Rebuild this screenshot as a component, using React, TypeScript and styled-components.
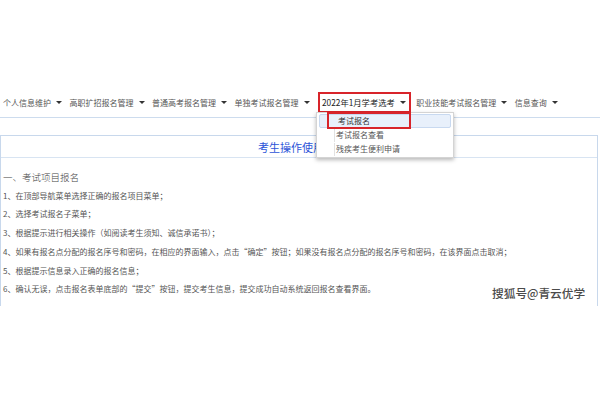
import React from "react";
import styled, { createGlobalStyle } from "styled-components";

const Global = createGlobalStyle`
  html, body { margin: 0; padding: 0; background: #fff; }
  body { font-family: "Noto Sans CJK SC", "Noto Sans", sans-serif; width: 600px; height: 400px; overflow: hidden; }
`;

const Page = styled.div`
  position: relative;
  width: 600px;
  height: 400px;
  padding-top: 88px;
  box-sizing: border-box;
`;

const Nav = styled.div`
  display: flex;
  align-items: center;
  height: 29px;
  padding-left: 3px;
  border-bottom: 1px solid #cddcee;
  gap: 7.5px;
`;

const NavItem = styled.div<{ $active?: boolean }>`
  position: relative;
  display: flex;
  align-items: center;
  gap: 5px;
  font-size: ${(p) => (p.$active ? "8.3px" : "8px")};
  line-height: 13px;
  color: ${(p) => (p.$active ? "#1a1a1a" : "#555")};
  white-space: nowrap;
  ${(p) =>
    p.$active
      ? `border: 2px solid #d8242a; padding: 2px 3px 2px 2px; margin-left: 1px; margin-right: -2px;`
      : ``}
`;

const Caret = styled.span`
  width: 0;
  height: 0;
  border-left: 3px solid transparent;
  border-right: 3px solid transparent;
  border-top: 3.5px solid #333;
`;

const Menu = styled.div`
  position: absolute;
  left: -4px;
  top: 18px;
  width: 138px;
  height: 46px;
  background: #fff;
  border: 1px solid #d4d4d4;
  box-shadow: 0 2px 4px rgba(0, 0, 0, 0.28);
  padding: 0 2px;
  box-sizing: border-box;
  z-index: 5;
  display: flex;
  flex-direction: column;
  justify-content: center;
`;

const MenuItem = styled.div<{ $hover?: boolean }>`
  position: relative;
  height: 14.3px;
  box-sizing: border-box;
  display: flex;
  align-items: center;
  padding-left: 16px;
  font-size: 8px;
  line-height: 10px;
  color: #555;
  border: 1px solid ${(p) => (p.$hover ? "#c8d9f0" : "transparent")};
  background: ${(p) => (p.$hover ? "#e8f0fb" : "transparent")};
  border-radius: 2px;
  &::before {
    content: "";
    position: absolute;
    left: 14px;
    top: ${(p) => (p.$hover ? "14px" : "0")};
    bottom: -1px;
    border-left: 1px solid #e2e2e2;
  }
`;

const Highlight = styled.span`
  display: inline-flex;
  align-items: center;
  height: 13px;
  margin-left: -9px;
  padding-left: 9px;
  width: 71px;
  border: 2px solid #d8242a;
  color: #333;
`;

const Box = styled.div`
  margin-top: 17px;
  border: 1px solid #c8d8ec;
  border-bottom: none;
  margin-right: 2px;
  height: 171px;
  box-sizing: border-box;
`;

const TitleRow = styled.div`
  height: 21px;
  border-bottom: 1px solid #d8e4f2;
  display: flex;
  align-items: center;
  justify-content: center;
  font-size: 11px;
  color: #2d55d8;
  padding-left: 6px;
`;

const Body = styled.div`
  padding: 10px 0 0 2px;
  color: #555;
  font-size: 8px;
`;

const Heading = styled.div`
  font-size: 9.5px;
  font-weight: 300;
  line-height: 18.7px;
  color: #444;
`;

const Line = styled.div`
  line-height: 18.7px;
  white-space: nowrap;
`;

const Watermark = styled.div`
  position: absolute;
  left: 492px;
  top: 284px;
  font-size: 11.7px;
  font-weight: 500;
  color: #4a4a4a;
  text-shadow: 0 0 2px #fff;
`;

const navItems = ["个人信息维护", "高职扩招报名管理", "普通高考报名管理", "单独考试报名管理"];

export default function App() {
  return (
    <>
      <Global />
      <Page>
        <Nav>
          {navItems.map((t) => (
            <NavItem key={t}>
              {t}
              <Caret />
            </NavItem>
          ))}
          <NavItem $active>
            2022年1月学考选考
            <Caret />
            <Menu>
              <MenuItem $hover>
                <Highlight>考试报名</Highlight>
              </MenuItem>
              <MenuItem>考试报名查看</MenuItem>
              <MenuItem>残疾考生便利申请</MenuItem>
            </Menu>
          </NavItem>
          <NavItem>
            职业技能考试报名管理
            <Caret />
          </NavItem>
          <NavItem>
            信息查询
            <Caret />
          </NavItem>
        </Nav>
        <Box>
          <TitleRow>考生操作使用说明</TitleRow>
          <Body>
            <Heading>一、考试项目报名</Heading>
            <Line>1、在顶部导航菜单选择正确的报名项目菜单；</Line>
            <Line>2、选择考试报名子菜单；</Line>
            <Line>3、根据提示进行相关操作（如阅读考生须知、诚信承诺书）；</Line>
            <Line>
              4、如果有报名点分配的报名序号和密码，在相应的界面输入，点击“确定”按钮；如果没有报名点分配的报名序号和密码，在该界面点击取消；
            </Line>
            <Line>5、根据提示信息录入正确的报名信息；</Line>
            <Line>6、确认无误，点击报名表单底部的“提交”按钮，提交考生信息，提交成功自动系统返回报名查看界面。</Line>
          </Body>
        </Box>
        <Watermark>搜狐号@青云优学</Watermark>
      </Page>
    </>
  );
}
